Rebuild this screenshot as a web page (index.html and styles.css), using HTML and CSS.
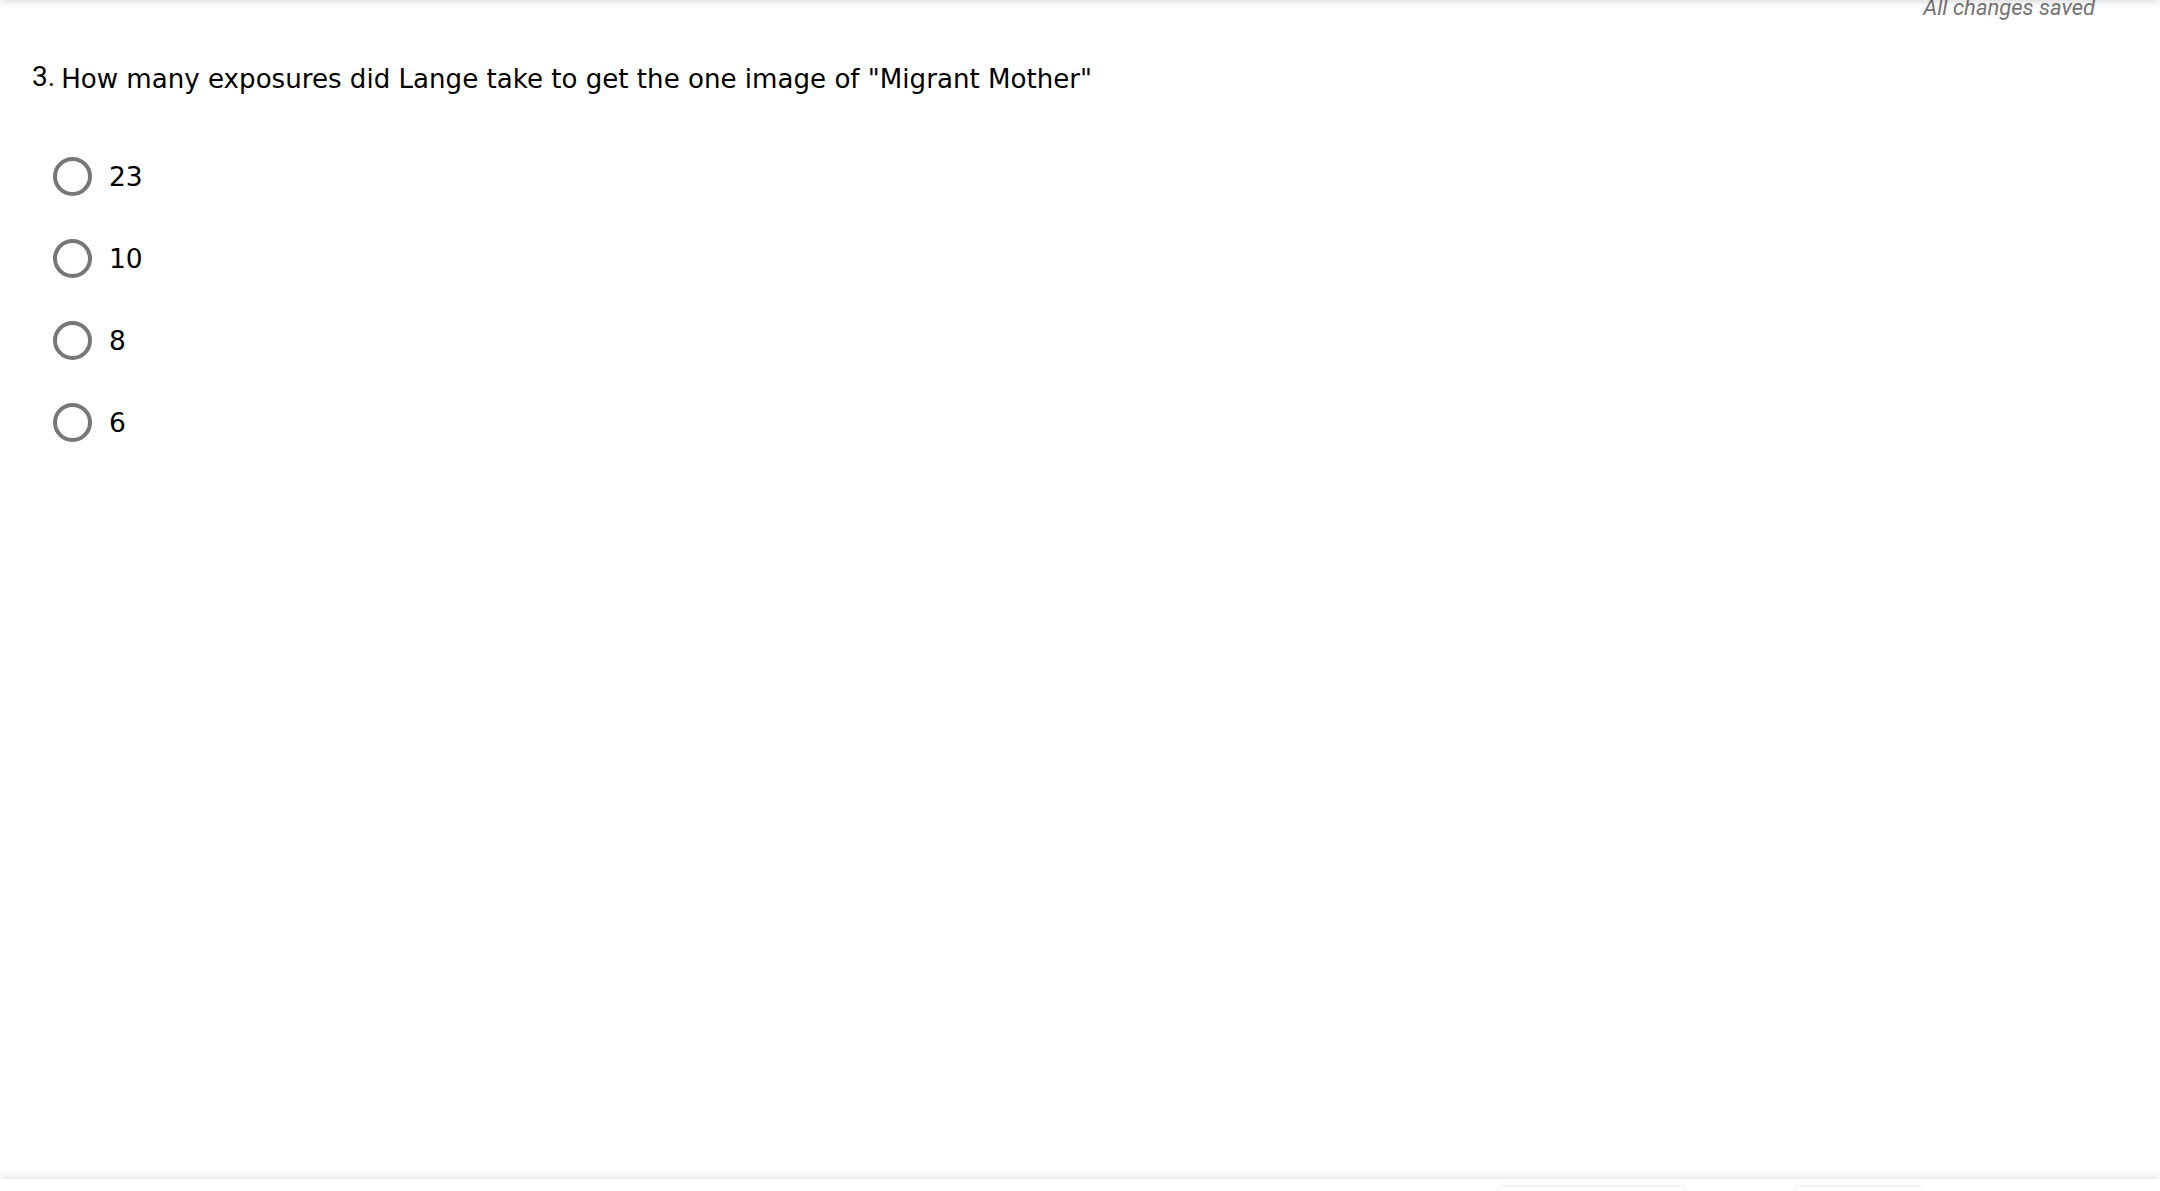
FILE: index.html
```html
<!DOCTYPE html>
<html lang="en">
<head>
    <meta charset="UTF-8">
    <title>Quiz - Question 3</title>
    <link rel="stylesheet" href="styles.css">
</head>
<body>

    <!-- Header sits just above the viewport, only its shadow shows -->
    <div class="header"></div>

    <div class="status">All changes saved</div>

    <div class="question">
        <span class="number">3.</span>
        <span class="prompt">How many exposures did Lange take to get the one image of "Migrant Mother"</span>
    </div>

    <div class="options">
        <label class="option"><span class="radio"></span><span class="answer">23</span></label>
        <label class="option"><span class="radio"></span><span class="answer">10</span></label>
        <label class="option"><span class="radio"></span><span class="answer">8</span></label>
        <label class="option"><span class="radio"></span><span class="answer">6</span></label>
    </div>

    <!-- Bottom navigation bar -->
    <div class="footer">
        <span class="footer-btn wide"></span>
        <span class="footer-btn"></span>
    </div>

</body>
</html>
```

FILE: styles.css
```css
body {
    margin: 0;
    font-family: "DejaVu Sans", Verdana, sans-serif;
    background: #fff;
    color: #000;
}

/* Header */
.header {
    position: fixed;
    top: -60px;
    left: 0;
    right: 0;
    height: 60px;
    background: #fff;
    box-shadow: 0 1px 8px rgba(0, 0, 0, 0.18);
    z-index: 5;
}

.status {
    font-family: Roboto, "Liberation Sans", sans-serif;
    font-style: italic;
    font-size: 22px;
    line-height: 20px;
    color: #757575;
    text-align: right;
    padding-right: 65px;
    margin-top: -2px;
}

/* Question */
.question {
    padding-left: 32px;
    margin-top: 44px;
    display: flex;
    align-items: baseline;
    gap: 6px;
}

.number {
    font-family: Roboto, "Liberation Sans", sans-serif;
    font-size: 28px;
    position: relative;
    top: -2px;
}

.prompt {
    font-size: 26.1px;
}

/* Options */
.options {
    display: flex;
    flex-direction: column;
    padding-left: 53px;
    margin-top: 40px;
}

.option {
    display: flex;
    align-items: center;
    gap: 17px;
    height: 82px;
    cursor: pointer;
}

.radio {
    width: 31px;
    height: 31px;
    border: 4px solid #777;
    border-radius: 50%;
}

.answer {
    font-size: 26.5px;
}

/* Footer */
.footer {
    position: fixed;
    bottom: 0;
    left: 0;
    right: 0;
    height: 12px;
    background: #fff;
    box-shadow: 0 -2px 10px rgba(0, 0, 0, 0.12);
    display: flex;
    justify-content: flex-end;
    gap: 112px;
    padding-right: 237px;
    padding-top: 8px;
    box-sizing: border-box;
}

.footer-btn {
    width: 127px;
    height: 10px;
    border-radius: 4px 4px 0 0;
    box-shadow: 0 -1px 4px rgba(0, 0, 0, 0.08);
}

.footer-btn.wide {
    width: 185px;
}
```
